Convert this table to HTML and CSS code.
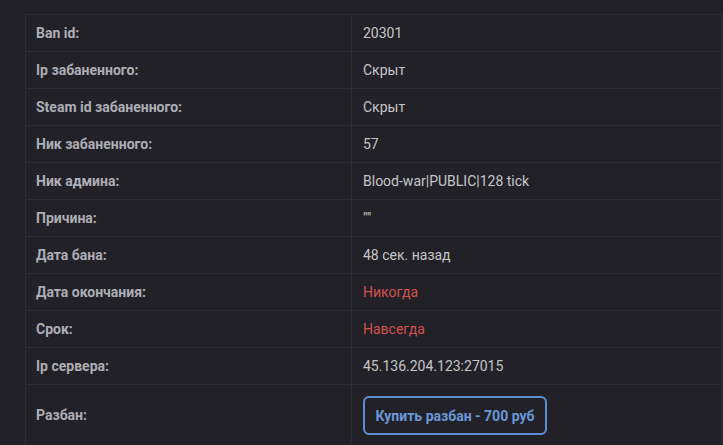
FILE: index.html
```html
<!DOCTYPE html>
<html lang="ru">
<head>
<meta charset="utf-8">
<title>Ban info</title>
<link rel="stylesheet" href="styles.css">
</head>
<body>
<table class="ban-table">
  <tbody>
    <tr><td class="label">Ban id:</td><td class="value">20301</td></tr>
    <tr><td class="label">Ip забаненного:</td><td class="value">Скрыт</td></tr>
    <tr><td class="label">Steam id забаненного:</td><td class="value">Скрыт</td></tr>
    <tr><td class="label">Ник забаненного:</td><td class="value">57</td></tr>
    <tr><td class="label">Ник админа:</td><td class="value">Blood-war|PUBLIC|128 tick</td></tr>
    <tr><td class="label">Причина:</td><td class="value">""</td></tr>
    <tr><td class="label">Дата бана:</td><td class="value">48 сек. назад</td></tr>
    <tr><td class="label">Дата окончания:</td><td class="value danger">Никогда</td></tr>
    <tr><td class="label">Срок:</td><td class="value danger">Навсегда</td></tr>
    <tr><td class="label">Ip сервера:</td><td class="value">45.136.204.123:27015</td></tr>
    <tr class="tall"><td class="label">Разбан:</td><td class="value"><button class="buy-btn" type="button">Купить разбан - 700 руб</button></td></tr>
  </tbody>
</table>
</body>
</html>
```

FILE: styles.css
```css
html, body {
  margin: 0;
  padding: 0;
  background: #202026;
  font-family: Roboto, "Noto Sans", "Liberation Sans", sans-serif;
  font-size: 14px;
  overflow: hidden;
}

.ban-table {
  margin: 14px 0 0 25px;
  width: 697px;
  border-collapse: collapse;
  table-layout: fixed;
  background: #212127;
}

.ban-table td {
  border: 1px solid #2d2d34;
  height: 36px;
  padding: 0 11px;
  vertical-align: middle;
  line-height: 16px;
}

.ban-table td.label {
  width: 304px;
  padding-left: 10px;
  font-weight: 700;
  color: #aeaeb6;
}

.ban-table td.value {
  color: #c6c6c8;
}

.ban-table td.danger {
  color: #d5524e;
}

.ban-table tr.tall td {
  height: 60px;
}

.buy-btn {
  display: inline-flex;
  align-items: center;
  justify-content: center;
  width: 184px;
  height: 39px;
  margin-top: 1px;
  padding: 0;
  border: 2px solid #5f8fd3;
  border-radius: 6px;
  background: transparent;
  color: #6a98d8;
  font-family: Roboto, "Noto Sans", "Liberation Sans", sans-serif;
  font-size: 14px;
  font-weight: 700;
  cursor: pointer;
}
```
